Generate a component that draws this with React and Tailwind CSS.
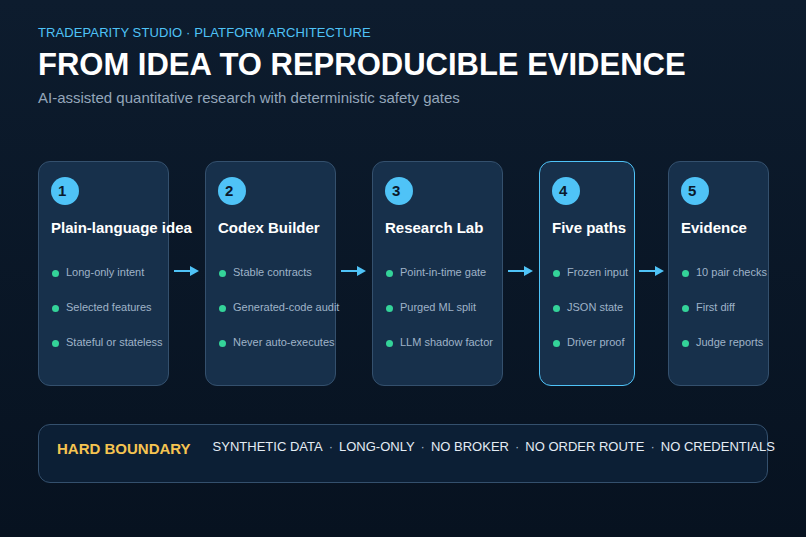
export default function App() {
  const cards = [
    { n: 1, t: "Plain-language idea", w: "w-[131px]", items: ["Long-only intent", "Selected features", "Stateful or stateless"] },
    { n: 2, t: "Codex Builder", w: "w-[131px]", items: ["Stable contracts", "Generated-code audit", "Never auto-executes"] },
    { n: 3, t: "Research Lab", w: "w-[131px]", items: ["Point-in-time gate", "Purged ML split", "LLM shadow factor"] },
    { n: 4, t: "Five paths", w: "w-[96px]", hl: true, items: ["Frozen input", "JSON state", "Driver proof"] },
    { n: 5, t: "Evidence", w: "w-[101px]", items: ["10 pair checks", "First diff", "Judge reports"] },
  ];
  const Arrow = ({ narrow }) => (
    <div className={`${narrow ? "w-[33px]" : "w-[36px]"} flex justify-center pt-[104px] shrink-0`}>
      <svg width="26" height="12" viewBox="0 0 26 12">
        <line x1="0" y1="6" x2="18" y2="6" stroke="#4fc3f7" strokeWidth="2" />
        <polygon points="16,1 25,6 16,11" fill="#4fc3f7" />
      </svg>
    </div>
  );
  const items = ["SYNTHETIC DATA", "LONG-ONLY", "NO BROKER", "NO ORDER ROUTE", "NO CREDENTIALS"];
  return (
    <div className="w-[806px] h-[537px] overflow-hidden bg-gradient-to-b from-[#0d1c2e] to-[#071220] px-[38px] pt-[25px]" style={{ fontFamily: '"Liberation Sans", Arial, sans-serif' }}>
      <div className="text-[13px] text-[#4fc3f7] leading-[16px] tracking-[0.1px]">TRADEPARITY STUDIO · PLATFORM ARCHITECTURE</div>
      <div className="text-[31px] font-bold text-white leading-[36px] mt-[6px]">FROM IDEA TO REPRODUCIBLE EVIDENCE</div>
      <div className="text-[15px] text-[#94a6ba] leading-[18px] mt-[6px]">AI-assisted quantitative research with deterministic safety gates</div>
      <div className="flex mt-[54px]">
        {cards.map((c, i) => (
          <div key={c.n} className="flex">
            {i > 0 && <Arrow narrow={i === 4} />}
            <div className={`${c.w} h-[225px] rounded-[12px] border ${c.hl ? "border-[#4fc3f7]" : "border-[#34506d]"} bg-[#17304b] pl-[12px] pt-[15px] shrink-0`}>
              <div className="w-[28px] h-[28px] rounded-full bg-[#4fc3f7] text-[#0b1a2c] font-bold text-[15px] pl-[7px] leading-[28px]">{c.n}</div>
              <div className="whitespace-nowrap text-white font-bold text-[15px] mt-[14px] leading-[18px]">{c.t}</div>
              <div className="mt-[26px] flex flex-col gap-[17px]">
                {c.items.map((it) => (
                  <div key={it} className="flex items-center whitespace-nowrap h-[18px]">
                    <span className="shrink-0 w-[7px] h-[7px] rounded-full bg-[#34d399] ml-[1px] mr-[7px] mt-[2px]" />
                    <span className="text-[11px] text-[#9fb3c8]">{it}</span>
                  </div>
                ))}
              </div>
            </div>
          </div>
        ))}
      </div>
      <div className="mt-[38px] h-[59px] w-[730px] rounded-[12px] border border-[#34506d] bg-[#0c1f35] flex items-start pt-[13px] pl-[18px] whitespace-nowrap">
        <span className="text-[#f5c451] font-bold text-[15px] leading-[20px] mt-[1px]">HARD BOUNDARY</span>
        <span className="text-[13px] text-[#e4ecf4] ml-[22px] leading-[18px] flex">
          {items.map((t, i) => (
            <span key={t} className="flex">
              {i > 0 && <span className="mx-[6px] text-[#9fb3c8]">·</span>}
              <span>{t}</span>
            </span>
          ))}
        </span>
      </div>
    </div>
  );
}
